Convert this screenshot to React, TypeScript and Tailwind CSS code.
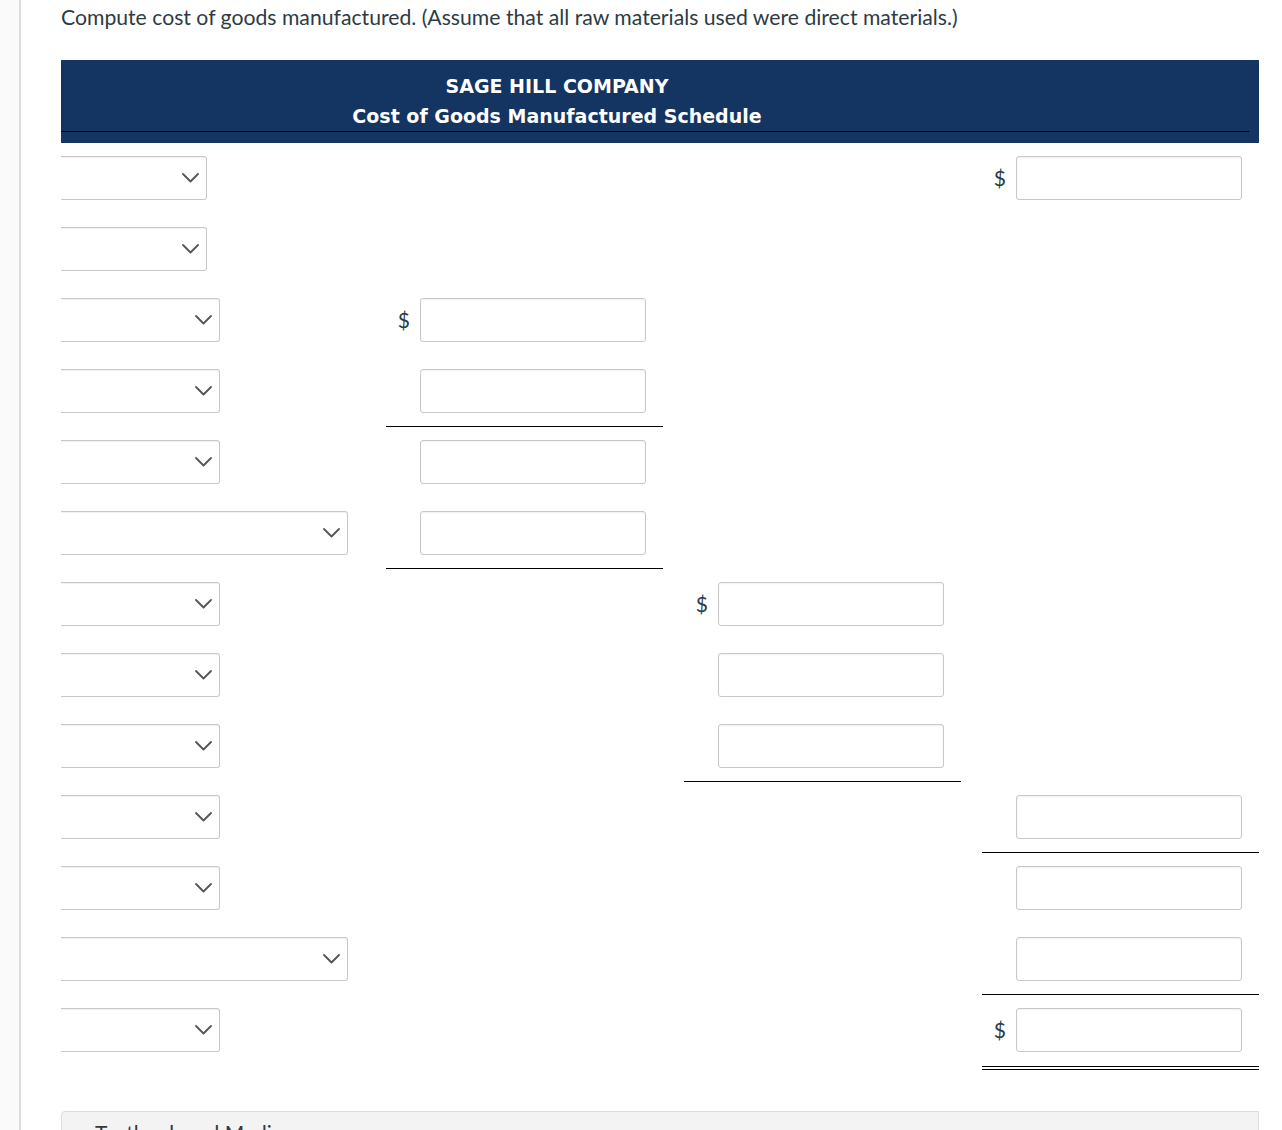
type Row = {
  select: number;
  col: 0 | 1 | 2 | 3;
  dollar?: boolean;
  line?: "single" | "double";
};

const rows: Row[] = [
  { select: 146, col: 3, dollar: true },
  { select: 146, col: 0 },
  { select: 159, col: 1, dollar: true },
  { select: 159, col: 1, line: "single" },
  { select: 159, col: 1 },
  { select: 287, col: 1, line: "single" },
  { select: 159, col: 2, dollar: true },
  { select: 159, col: 2 },
  { select: 159, col: 2, line: "single" },
  { select: 159, col: 3, line: "single" },
  { select: 159, col: 3 },
  { select: 287, col: 3, line: "single" },
  { select: 159, col: 3, dollar: true, line: "double" },
];

function Select({ width }: { width: number }) {
  return (
    <div
      className="h-[44px] bg-white border border-l-0 border-[#c8c8c8] rounded-r-[3px] shadow-[inset_0_1px_1px_rgba(0,0,0,0.06)] flex items-center justify-end pr-[7px]"
      style={{ width }}
    >
      <svg width="17" height="10" viewBox="0 0 17 10" fill="none">
        <polyline
          points="1,1 8.5,8.5 16,1"
          stroke="#555"
          strokeWidth="1.8"
          strokeLinecap="round"
          strokeLinejoin="round"
        />
      </svg>
    </div>
  );
}

function AmountCell({ dollar, line }: { dollar?: boolean; line?: "single" | "double" }) {
  return (
    <div
      className={`pt-[13px] ${line === "single" ? "h-[71px] border-b border-black" : ""} ${
        line === "double" ? "h-[75px] border-b-4 border-double border-black" : ""
      } ${!line ? "h-[71px]" : ""}`}
    >
      <div className="flex items-center">
        <span className="w-[34px] pr-[10px] text-right text-[21px] text-[#2d3b45]">
          {dollar ? "$" : ""}
        </span>
        <div className="w-[226px] h-[44px] bg-white border border-[#c8c8c8] rounded-[3px] shadow-[inset_0_1px_2px_rgba(0,0,0,0.06)]" />
      </div>
    </div>
  );
}

export default function App() {
  return (
    <div className="h-[1130px] flex bg-white font-['Lato','Liberation_Sans',sans-serif] overflow-hidden">
      {/* left rail */}
      <div className="w-[21px] shrink-0 bg-[#fafafa] border-r-2 border-[#dcdcdc]" />

      <div className="w-[1238px] pl-[40px] shrink-0">
        <p className="pt-[2px] text-[21.2px] leading-[30px] text-[#2d3b45] whitespace-nowrap">
          Compute cost of goods manufactured. (Assume that all raw materials used were direct materials.)
        </p>

        {/* Header */}
        <div className="mt-[28px] w-[1198px] bg-[#143461] pt-[11px] pb-[11px] pr-[10px]">
          <div className="border-b border-black">
            <div className="w-[992px] text-center text-white font-['DejaVu_Sans','Verdana',sans-serif] font-bold text-[19px] leading-[30px]">
              <div>SAGE HILL COMPANY</div>
              <div>Cost of Goods Manufactured Schedule</div>
            </div>
          </div>
        </div>

        {/* Schedule */}
        <div className="w-[1198px] grid grid-cols-[304px_277px_277px_277px] gap-x-[21px]">
          {rows.map((r, i) => (
            <div key={i} className="contents">
              <div className="h-[71px] pt-[13px]">
                <Select width={r.select} />
              </div>
              {[1, 2, 3].map((c) =>
                c === r.col ? (
                  <AmountCell key={c} dollar={r.dollar} line={r.line} />
                ) : (
                  <div key={c} className="h-[71px]" />
                )
              )}
            </div>
          ))}
        </div>

        {/* Bottom box */}
        <div className="mt-[41px] w-[1198px] h-[80px] bg-[#f3f3f3] border border-[#dcdcdc] rounded-tl-[4px] pl-[33px] pt-[6px]">
          <span className="text-[21px] leading-[30px] text-[#2d3b45]">Textbook and Media</span>
        </div>
      </div>
    </div>
  );
}
